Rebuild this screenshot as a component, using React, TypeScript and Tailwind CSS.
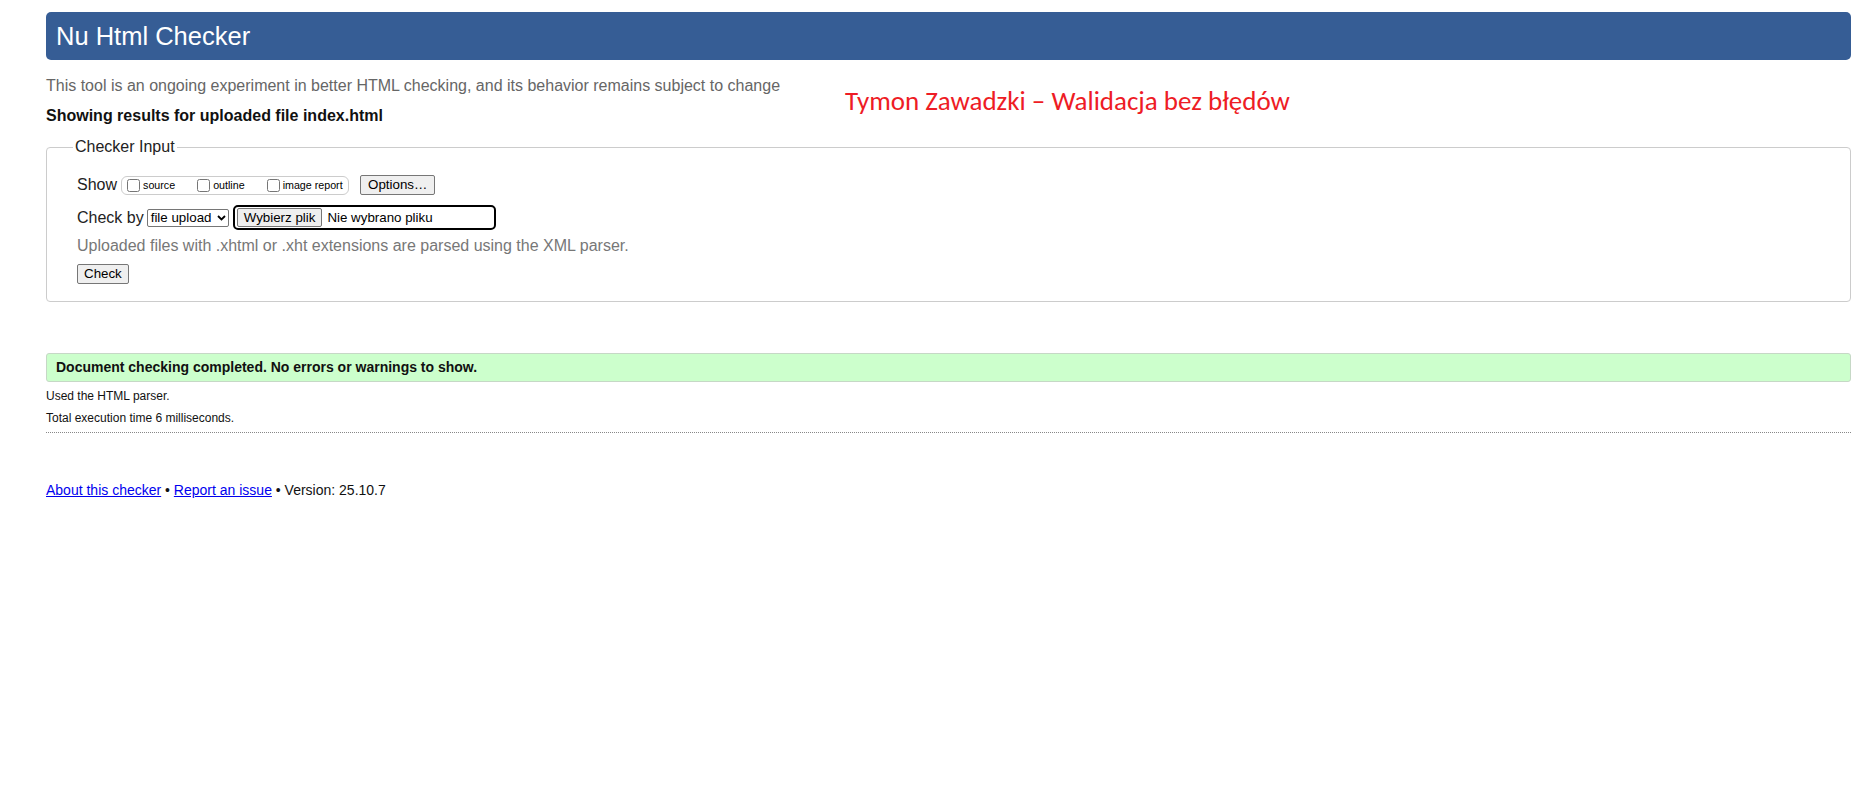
import React from 'react';

const arial = { fontFamily: '"Liberation Sans", Arial, sans-serif' };

const Checkbox: React.FC<{ label: string; last?: boolean }> = ({ label, last }) => (
  <label className={`flex items-center ${last ? '' : 'mr-[18px]'}`}>
    <input type="checkbox" className="ml-[4px] mr-[3px] h-[13px] w-[13px]" />
    <span className="text-[10.7px] leading-[14px] text-black">{label}</span>
  </label>
);

const App: React.FC = () => {
  return (
    <div className="relative min-h-[808px] bg-white pl-[46px] pr-[24px] pt-[12px] text-black" style={arial}>
      {/* Title bar */}
      <h1 className="h-[48px] rounded-[5px] bg-[#365d95] pl-[10px] text-[25.5px] leading-[48px] font-normal text-white">
        Nu Html Checker
      </h1>

      <p className="mt-[16px] h-[20px] text-[16px] leading-[20px] text-[#666]">
        This tool is an ongoing experiment in better HTML checking, and its behavior remains subject to change
      </p>
      <p className="mt-[10px] h-[20px] text-[16px] leading-[20px] font-bold text-[#111]">
        Showing results for uploaded file index.html
      </p>

      {/* Annotation pasted over the page */}
      <div
        className="absolute left-[845px] top-[84px] text-[27px] leading-[34px] text-[#ee1c25]"
        style={{ fontFamily: 'Carlito, "Open Sans", sans-serif' }}
      >
        Tymon Zawadzki – Walidacja bez błędów
      </div>

      <fieldset className="mt-[11px] rounded-[4px] border border-[#cccccc] pb-[17px] pl-[30px] pt-[18px]">
        <legend className="-ml-[4px] px-[2px] text-[16px] leading-[20px] text-[#222]">Checker Input</legend>

        <div className="flex h-[20px] items-center">
          <span className="text-[16px] leading-[20px] text-[#222]">Show</span>
          <div className="ml-[4px] flex h-[19px] w-[228px] items-center rounded-[6px] border border-[#cccccc] pl-[1px]">
            <Checkbox label="source" />
            <Checkbox label="outline" />
            <Checkbox label="image report" last />
          </div>
          <button className="ml-[11px] h-[20px] rounded-[2px] border border-[#767676] bg-[#efefef] px-[7px] text-[13.33px] leading-[18px] text-black">
            Options…
          </button>
        </div>

        <div className="mt-[10px] flex h-[25px] items-center">
          <span className="text-[16px] leading-[20px] text-[#222]">Check by</span>
          <div className="ml-[3px] flex h-[18px] w-[82px] items-center justify-between rounded-[2px] border border-[#767676] bg-white pl-[3px] pr-[2px] text-[13.33px] leading-[16px] text-black">
            <span>file upload</span>
            <svg width="9" height="6" viewBox="0 0 9 6" fill="none">
              <path d="M1 1l3.5 3.5L8 1" stroke="#000" strokeWidth="1.8" />
            </svg>
          </div>
          <div className="ml-[4px] flex h-[25px] w-[263px] items-center rounded-[5px] border-2 border-black pl-[2px] text-[13.33px] text-black">
            <button className="h-[19px] rounded-[2px] border border-[#767676] bg-[#efefef] px-[6px] leading-[17px]">
              Wybierz plik
            </button>
            <span className="ml-[5px] leading-[17px]">Nie wybrano pliku</span>
          </div>
        </div>

        <p className="mt-[6px] h-[20px] text-[16px] leading-[20px] text-[#777]">
          Uploaded files with .xhtml or .xht extensions are parsed using the XML parser.
        </p>

        <button className="mt-[8px] block h-[20px] rounded-[2px] border border-[#767676] bg-[#efefef] px-[6px] text-[13.33px] leading-[18px] text-black">
          Check
        </button>
      </fieldset>

      {/* Result */}
      <div className="mt-[51px] flex h-[29px] items-center rounded-[3px] border border-[#c6d8c6] bg-[#ccffcc] pl-[9px]">
        <span className="text-[14px] font-bold text-[#111]">Document checking completed. No errors or warnings to show.</span>
      </div>
      <p className="mt-[6px] h-[16px] text-[12px] leading-[16px] text-[#111]">Used the HTML parser.</p>
      <p className="mt-[6px] h-[16px] text-[12px] leading-[16px] text-[#111]">Total execution time 6 milliseconds.</p>
      <div className="mt-[6px] border-t border-dotted border-[#888]" />

      {/* Footer */}
      <p className="mt-[48px] h-[18px] text-[14px] leading-[18px] text-[#111]">
        <a href="#" className="text-[#0000ee] underline">About this checker</a>
        {' • '}
        <a href="#" className="text-[#0000ee] underline">Report an issue</a>
        {' • Version: 25.10.7'}
      </p>
    </div>
  );
};

export default App;
